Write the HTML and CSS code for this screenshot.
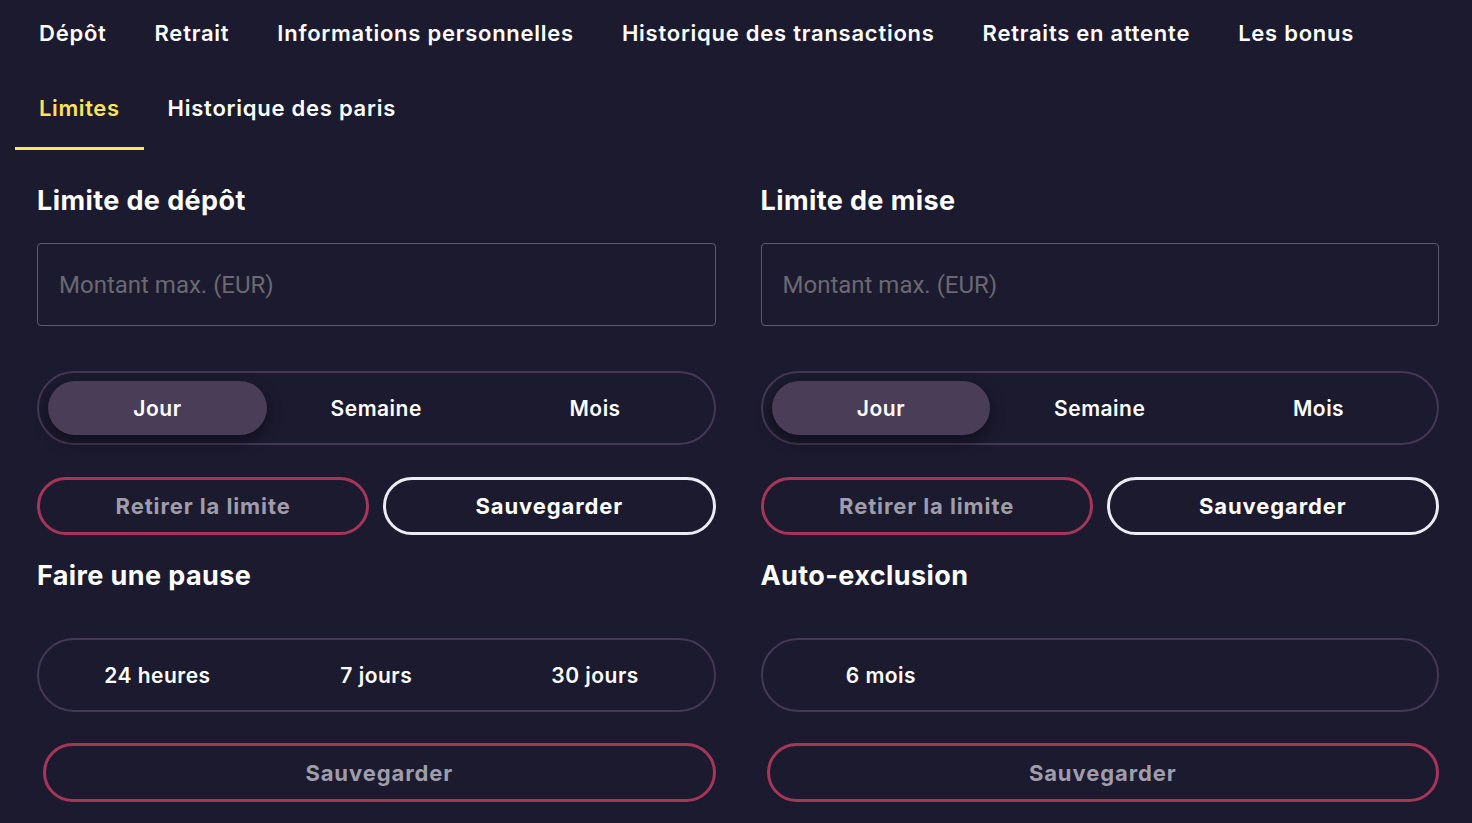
FILE: index.html
```html
<!DOCTYPE html>
<html lang="fr">
<head>
<meta charset="utf-8">
<title>Limites</title>
<link rel="stylesheet" href="styles.css">
</head>
<body>
<nav class="tabs">
  <a class="tab">Dépôt</a>
  <a class="tab">Retrait</a>
  <a class="tab">Informations personnelles</a>
  <a class="tab">Historique des transactions</a>
  <a class="tab">Retraits en attente</a>
  <a class="tab">Les bonus</a>
  <span class="tab-break"></span>
  <a class="tab active">Limites</a>
  <a class="tab">Historique des paris</a>
</nav>
<main class="grid">
  <section class="col">
    <h2 class="title">Limite de dépôt</h2>
    <input class="field" type="text" placeholder="Montant max. (EUR)">
    <div class="segment">
      <span class="opt on">Jour</span>
      <span class="opt">Semaine</span>
      <span class="opt">Mois</span>
    </div>
    <div class="actions">
      <button class="btn btn-red">Retirer la limite</button>
      <button class="btn btn-white">Sauvegarder</button>
    </div>
    <h2 class="title title-2">Faire une pause</h2>
    <div class="segment segment-2">
      <span class="opt">24 heures</span>
      <span class="opt">7 jours</span>
      <span class="opt">30 jours</span>
    </div>
    <button class="btn btn-red btn-wide">Sauvegarder</button>
  </section>
  <section class="col">
    <h2 class="title">Limite de mise</h2>
    <input class="field" type="text" placeholder="Montant max. (EUR)">
    <div class="segment">
      <span class="opt on">Jour</span>
      <span class="opt">Semaine</span>
      <span class="opt">Mois</span>
    </div>
    <div class="actions">
      <button class="btn btn-red">Retirer la limite</button>
      <button class="btn btn-white">Sauvegarder</button>
    </div>
    <h2 class="title title-2">Auto-exclusion</h2>
    <div class="segment segment-2">
      <span class="opt">6 mois</span>
    </div>
    <button class="btn btn-red btn-wide">Sauvegarder</button>
  </section>
</main>
</body>
</html>
```
FILE: styles.css
```css
* { box-sizing: border-box; }
html, body {
  margin: 0;
  padding: 0;
  background: #1c1a2e;
  color: #ffffff;
  font-family: "Inter", "Open Sans", sans-serif;
}
body { width: 1472px; height: 823px; overflow: hidden; }

.tabs {
  display: flex;
  flex-wrap: wrap;
  padding-left: 15px;
}
.tab-break { flex-basis: 100%; height: 0; }
.tab {
  height: 75px;
  padding: 19px 24px 0;
  font-size: 22px;
  line-height: 28px;
  font-weight: 600;
  letter-spacing: 0.75px;
  color: #ffffff;
  white-space: nowrap;
  border-bottom: 3px solid transparent;
}
.tab.active {
  color: #fde35a;
  letter-spacing: 0.6px;
  border-bottom-color: #fde35a;
}

.grid {
  display: grid;
  grid-template-columns: 1fr 1fr;
  column-gap: 45px;
  padding: 0 33px 0 37px;
}
.col { display: flex; flex-direction: column; }

.title {
  margin: 35px 0 0;
  font-size: 27px;
  line-height: 32px;
  font-weight: 700;
  letter-spacing: 0.4px;
}
.title-2 { margin-top: 25px; }

.field {
  margin-top: 26px;
  height: 83px;
  border: 1px solid #5d5a6b;
  border-radius: 4px;
  background: transparent;
  padding: 0 21px;
  font-family: "Roboto", sans-serif;
  font-size: 24px;
  color: #ffffff;
  outline: none;
}
.field::placeholder { color: #6a6873; }

.segment {
  margin-top: 45px;
  height: 74px;
  border: 2px solid #443852;
  border-radius: 40px;
  padding: 8px 9px;
  display: grid;
  grid-template-columns: repeat(3, 1fr);
}
.segment-2 { margin-top: 46px; }
.opt {
  display: flex;
  align-items: center;
  justify-content: center;
  border-radius: 28px;
  font-size: 21px;
  font-weight: 600;
  letter-spacing: 0.5px;
}
.opt.on {
  background: #4a3d57;
  box-shadow: 0 6px 14px rgba(8, 6, 16, 0.55);
}

.actions {
  margin-top: 32px;
  display: flex;
  gap: 14px;
}
.btn {
  flex: 1;
  height: 58px;
  border-radius: 30px;
  background: transparent;
  font-family: "Inter", "Open Sans", sans-serif;
  font-size: 22px;
  font-weight: 700;
  letter-spacing: 0.9px;
  padding: 0;
}
.btn-red { border: 3px solid #a5365a; color: #a09dab; }
.btn-white { border: 3px solid #ecebf6; color: #ffffff; }
.btn-wide {
  flex: none;
  margin: 31px 0 0 6px;
  height: 59px;
}
```
